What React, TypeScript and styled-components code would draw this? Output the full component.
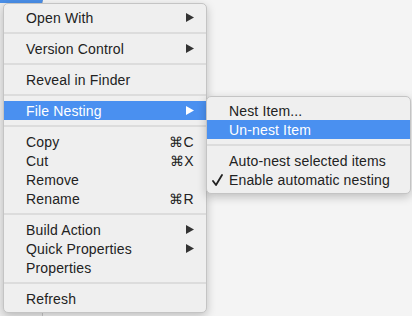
import React from "react";
import styled, { createGlobalStyle } from "styled-components";

const Global = createGlobalStyle`
  html, body {
    margin: 0;
    padding: 0;
    background: #f4f4f4;
  }
  body {
    font-family: "Liberation Sans", Arial, sans-serif;
    font-size: 14px;
    letter-spacing: 0.15px;
    color: #222;
  }
`;

const Stage = styled.div`
  position: relative;
  width: 412px;
  height: 316px;
  overflow: hidden;
  display: flex;
`;

const Sidebar = styled.div`
  width: 43px;
  height: 100%;
  background: #ededed;
  border-right: 1px solid #c9c9c9;
  border-top: 3px solid #4a8fe8;
  box-sizing: border-box;
`;

const Pane = styled.div`
  flex: 1;
  background: #f4f4f4;
`;

const Menu = styled.div<{ $top: number; $left: number; $width: number }>`
  position: absolute;
  top: ${(p) => p.$top}px;
  left: ${(p) => p.$left}px;
  width: ${(p) => p.$width}px;
  padding: 4px 0;
  box-sizing: border-box;
  background: #efefef;
  border: 1px solid #c4c4c4;
  border-radius: 5px;
  box-shadow: 0 3px 10px rgba(0, 0, 0, 0.22);
`;

const Item = styled.div<{ $active?: boolean }>`
  display: flex;
  align-items: center;
  height: 19px;
  padding: 0 12px 0 22px;
  background: ${(p) => (p.$active ? "#4a90f0" : "transparent")};
  color: ${(p) => (p.$active ? "#fff" : "#222")};
  position: relative;
  white-space: nowrap;
`;

const Label = styled.span`
  flex: 1;
`;

const Shortcut = styled.span`
  letter-spacing: 0.5px;
`;

const Check = styled.svg`
  position: absolute;
  left: 5px;
  top: 4px;
`;

const Separator = styled.div`
  height: 12px;
  display: flex;
  align-items: center;
  &::after {
    content: "";
    flex: 1;
    height: 2px;
    background: #dcdcdc;
  }
`;

function Arrow({ white }: { white?: boolean }) {
  return (
    <svg width="8" height="9" viewBox="0 0 8 9">
      <path d="M0 0 L8 4.5 L0 9 Z" fill={white ? "#fff" : "#333"} />
    </svg>
  );
}

type Row =
  | { sep: true }
  | { label: string; arrow?: boolean; key?: string; active?: boolean; check?: boolean };

const mainRows: Row[] = [
  { label: "Open With", arrow: true },
  { sep: true },
  { label: "Version Control", arrow: true },
  { sep: true },
  { label: "Reveal in Finder" },
  { sep: true },
  { label: "File Nesting", arrow: true, active: true },
  { sep: true },
  { label: "Copy", key: "⌘C" },
  { label: "Cut", key: "⌘X" },
  { label: "Remove" },
  { label: "Rename", key: "⌘R" },
  { sep: true },
  { label: "Build Action", arrow: true },
  { label: "Quick Properties", arrow: true },
  { label: "Properties" },
  { sep: true },
  { label: "Refresh" },
];

const subRows: Row[] = [
  { label: "Nest Item..." },
  { label: "Un-nest Item", active: true },
  { sep: true },
  { label: "Auto-nest selected items" },
  { label: "Enable automatic nesting", check: true },
];

function renderRows(rows: Row[]) {
  return rows.map((r, i) =>
    "sep" in r ? (
      <Separator key={i} />
    ) : (
      <Item key={i} $active={r.active}>
        {r.check && (
          <Check width="11" height="12" viewBox="0 0 11 12">
            <path
              d="M1 7 L4 11 L10 1"
              fill="none"
              stroke="#222"
              strokeWidth="1.8"
              strokeLinecap="round"
              strokeLinejoin="round"
            />
          </Check>
        )}
        <Label>{r.label}</Label>
        {r.key && <Shortcut>{r.key}</Shortcut>}
        {r.arrow && <Arrow white={r.active} />}
      </Item>
    )
  );
}

export default function App() {
  return (
    <Stage>
      <Global />
      <Sidebar />
      <Pane />
      <Menu $top={3} $left={3} $width={204}>
        {renderRows(mainRows)}
      </Menu>
      <Menu $top={96} $left={206} $width={205}>
        {renderRows(subRows)}
      </Menu>
    </Stage>
  );
}
